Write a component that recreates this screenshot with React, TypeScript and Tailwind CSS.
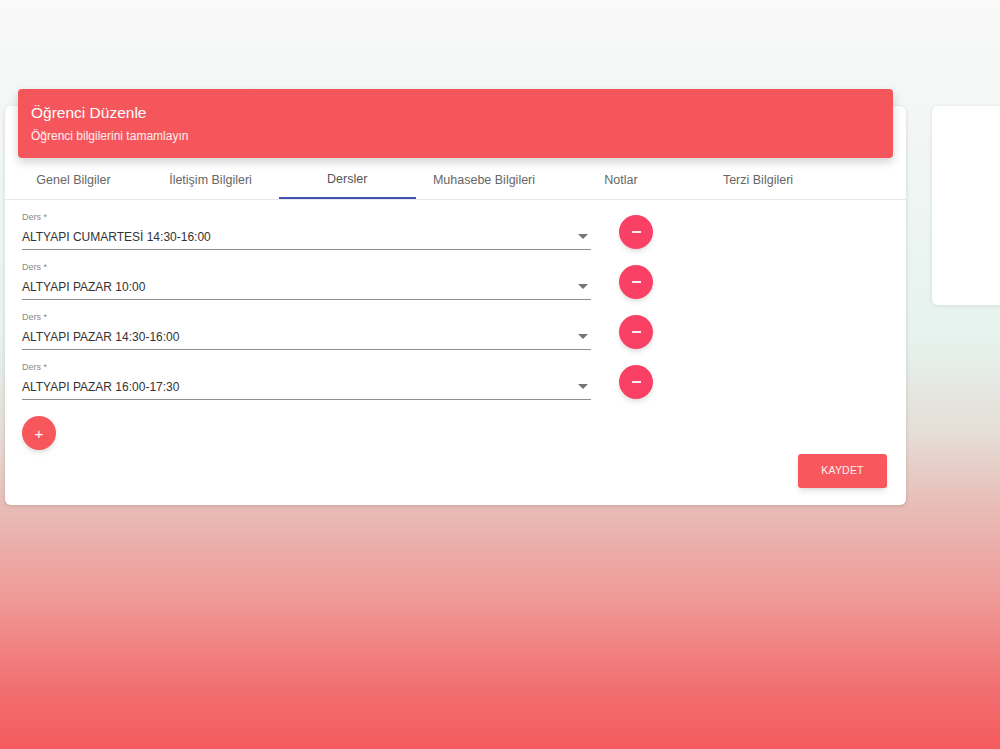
// ─── Data ─────────────────────────────────────────────────────────────────────

const tabs = ['Genel Bilgiler', 'İletişim Bilgileri', 'Dersler', 'Muhasebe Bilgileri', 'Notlar', 'Terzi Bilgileri']

const lessons = [
  'ALTYAPI CUMARTESİ 14:30-16:00',
  'ALTYAPI PAZAR 10:00',
  'ALTYAPI PAZAR 14:30-16:00',
  'ALTYAPI PAZAR 16:00-17:30',
]

// ─── Pieces ───────────────────────────────────────────────────────────────────

function LessonRow({ value }: { value: string }) {
  return (
    <div className="flex items-start h-[50px]">
      <div className="w-[569px] pt-[9px]">
        <div className="text-[9px] leading-[12px] text-[#8a8a8a]">Ders *</div>
        <div className="flex items-center justify-between h-[27px] pt-[1px] border-b border-[#8f8f8f]">
          <span className="text-[12px] text-[#333]">{value}</span>
          <svg className="w-[10px] h-[5px] mr-[3px]" viewBox="0 0 10 5">
            <path d="M0 0h10L5 5z" fill="#757575" />
          </svg>
        </div>
      </div>
      <button className="ml-[28px] mt-[13px] w-[34px] h-[34px] rounded-full bg-[#fb4066] shadow-md flex items-center justify-center">
        <span className="block w-[9px] h-[1.5px] bg-white/90" />
      </button>
    </div>
  )
}

// ─── App ──────────────────────────────────────────────────────────────────────

export default function App() {
  return (
    <div
      className="w-[1000px] h-[749px] overflow-hidden font-['Liberation_Sans',Arial,sans-serif] bg-[linear-gradient(180deg,#f9f9f9_0%,#f1f6f4_20%,#e6f3ee_45%,#e5ddd6_58%,#e9bbb6_68%,#ef9a97_80%,#f26f70_92%,#f55a5e_100%)]"
    >
      <div className="flex items-start gap-[26px] pt-[106px] pl-[5px]">
        {/* Main card */}
        <div className="w-[901px] bg-white rounded-[6px] shadow-[0_1px_4px_rgba(0,0,0,0.14)] pb-[17px] shrink-0">
          {/* Header */}
          <div className="mx-[13px] -mt-[17px] h-[69px] rounded-[4px] bg-[#f5565b] shadow-[0_4px_10px_rgba(0,0,0,0.18)] px-[13px] pt-[14px] text-white">
            <div className="text-[15.5px] leading-[20px] font-light">Öğrenci Düzenle</div>
            <div className="text-[12px] leading-[14px] mt-[6px] text-white/90">Öğrenci bilgilerini tamamlayın</div>
          </div>

          {/* Tabs */}
          <div className="flex h-[42px] border-b border-[#e8e8e8]">
            {tabs.map((t) => (
              <div
                key={t}
                className={
                  t === 'Dersler'
                    ? 'w-[136.5px] flex items-center justify-center text-[12.5px] text-[#555] border-b-2 border-[#3f51b5] pt-[3px]'
                    : 'w-[137px] flex items-center justify-center text-[12.5px] text-[#666] pt-[3px]'
                }
              >
                {t}
              </div>
            ))}
          </div>

          {/* Lesson rows */}
          <div className="pl-[17px] pt-[2px]">
            {lessons.map((l) => (
              <LessonRow key={l} value={l} />
            ))}
            <button className="mt-[14px] w-[34px] h-[34px] rounded-full bg-[#f7565b] shadow-md flex items-center justify-center text-white text-[15px] leading-none">
              +
            </button>
          </div>

          <div className="flex justify-end pr-[19px] mt-[4px]">
            <button className="w-[89px] h-[34px] rounded-[3px] bg-[#f7575d] shadow-md text-white/90 text-[10.5px] tracking-[0.2px]">
              KAYDET
            </button>
          </div>
        </div>

        {/* Side card */}
        <div className="w-[90px] h-[199px] bg-white rounded-[6px] shadow-[0_1px_4px_rgba(0,0,0,0.1)] shrink-0" />
      </div>
    </div>
  )
}
